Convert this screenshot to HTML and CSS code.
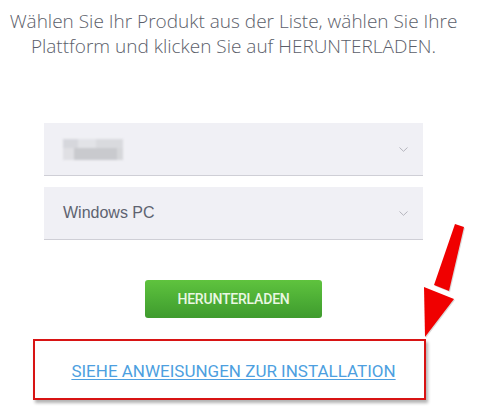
FILE: index.html
```html
<!DOCTYPE html>
<html lang="de">
<head>
<meta charset="utf-8">
<link rel="stylesheet" href="styles.css">
</head>
<body>
<div class="page">
  <p class="intro">Wählen Sie Ihr Produkt aus der Liste, wählen Sie Ihre Plattform und klicken Sie auf HERUNTERLADEN.</p>
  <div class="form">
    <div class="select">
      <span class="blurred"><span class="b1"></span><span class="b2"></span></span>
      <svg class="chev" width="9" height="5" viewBox="0 0 9 5"><path d="M0.5 0.5 L4.5 4.3 L8.5 0.5" fill="none" stroke="#b4b4bc" stroke-width="1"/></svg>
    </div>
    <div class="select">
      <span class="value">Windows PC</span>
      <svg class="chev" width="9" height="5" viewBox="0 0 9 5"><path d="M0.5 0.5 L4.5 4.3 L8.5 0.5" fill="none" stroke="#b4b4bc" stroke-width="1"/></svg>
    </div>
    <div class="btn-row"><a class="btn">HERUNTERLADEN</a></div>
  </div>
  <div class="highlight">
    <a class="link" href="#">SIEHE ANWEISUNGEN ZUR INSTALLATION</a>
  </div>
  <svg class="arrow" width="60" height="125" viewBox="0 0 60 125">
    <g transform="translate(1,1)" fill="#9a9a9a" opacity="0.35">
      <polygon points="39,0 48,3 33,67 18,61"/>
      <polygon points="8,63 38,75 9,113"/>
    </g>
    <polygon points="39,0 48,3 33,67 18,61" fill="#f00000"/>
    <polygon points="8,63 38,75 9,113" fill="#f00000"/>
  </svg>
</div>
</body>
</html>
```

FILE: styles.css
```css
html, body {
  margin: 0;
  padding: 0;
  background: #ffffff;
}
.page {
  position: relative;
  width: 478px;
  height: 411px;
  overflow: hidden;
}
.intro {
  margin: 0;
  padding: 9px 11px 0 0;
  text-align: center;
  font-family: "Open Sans", sans-serif;
  font-weight: 300;
  font-size: 19px;
  line-height: 25px;
  color: #5b5e6a;
}
.form {
  margin: 64px 0 0 44px;
  width: 379px;
  display: flex;
  flex-direction: column;
  gap: 11px;
}
.select {
  height: 52px;
  background: #f0f0f5;
  border-bottom: 1px solid #cfcfd6;
  display: flex;
  align-items: center;
  padding: 0 15px 0 19px;
}
.value {
  font-family: "Liberation Sans", Arial, sans-serif;
  font-size: 16px;
  color: #5e6370;
}
.blurred {
  display: flex;
  flex-direction: column;
  width: 60px;
  height: 21px;
  margin-top: 1px;
  filter: blur(0.8px);
}
.b1 {
  height: 9px;
  background: linear-gradient(to right, #d6d7dc 0, #d6d7dc 25%, #e2e3e7 25%, #e2e3e7 55%, #d9dade 55%, #d9dade 100%);
}
.b2 {
  height: 12px;
  background: linear-gradient(to right, #e0e0e4 0, #e0e0e4 18%, #c9cace 18%, #c9cace 90%, #d6d7da 90%);
}
.chev {
  margin-left: auto;
  margin-top: 1px;
}
.btn-row {
  display: flex;
  justify-content: center;
  margin-top: 29px;
}
.btn {
  display: flex;
  align-items: center;
  justify-content: center;
  width: 177px;
  height: 38px;
  border-radius: 3px;
  background: linear-gradient(to bottom, #5fc33e 0%, #4cad35 55%, #3f9b2e 100%);
  color: #eaf7e3;
  font-family: Roboto, "Liberation Sans", sans-serif;
  font-weight: 500;
  font-size: 14px;
  letter-spacing: -0.2px;
}
.highlight {
  margin: 21px 0 0 33px;
  width: 389px;
  height: 57px;
  border: 2px solid #d81414;
  box-shadow: 2px 3px 3px rgba(0, 0, 0, 0.3);
  display: flex;
  align-items: center;
  justify-content: center;
}
.link {
  font-family: Roboto, "Liberation Sans", sans-serif;
  font-size: 17px;
  color: #4d9fe0;
  text-decoration: underline;
  text-underline-offset: 2px;
  margin: 3px 0 0 8px;
}
.arrow {
  position: absolute;
  left: 416px;
  top: 224px;
}
```
